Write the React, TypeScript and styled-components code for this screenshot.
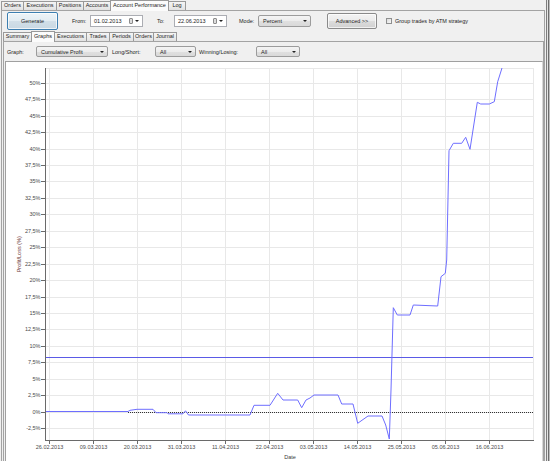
import React from "react";
import styled, { createGlobalStyle } from "styled-components";

const GlobalStyle = createGlobalStyle`
  html, body {
    margin: 0;
    padding: 0;
    background: #f0f0f0;
  }
  body {
    font-family: "Liberation Sans", Arial, sans-serif;
    font-size: 5.5px;
    color: #1e1e1e;
  }
`;

const Window = styled.div`
  display: flex;
  width: 550px;
  height: 461px;
  overflow: hidden;
  background: #f0f0f0;
`;

const Main = styled.div`
  display: flex;
  flex-direction: column;
  width: 545px;
`;

const FrameEdge = styled.div`
  width: 5px;
  background: linear-gradient(
    to right,
    #f0f0f0 0 1px,
    #7d7d7d 1px 2px,
    #e4e4e4 2px 3px,
    #6e6e6e 3px 4px,
    #bdbdbd 4px 5px
  );
`;

const TabStrip = styled.div<{ $indent: number }>`
  position: relative;
  z-index: 1;
  display: flex;
  align-items: flex-end;
  height: 10px;
  padding-left: ${({ $indent }) => $indent}px;
`;

const Tab = styled.div<{ $active?: boolean; $width: number }>`
  box-sizing: border-box;
  display: flex;
  align-items: center;
  justify-content: center;
  width: ${({ $width }) => $width}px;
  height: ${({ $active }) => ($active ? 11 : 9)}px;
  margin-right: -1px;
  margin-bottom: ${({ $active }) => ($active ? -1 : 0)}px;
  border: 1px solid #999;
  border-bottom: none;
  background: ${({ $active }) => ($active ? "#fbfbfb" : "linear-gradient(#f5f5f5, #e2e2e2)")};
  white-space: nowrap;
  line-height: 1;
`;

const OuterPanel = styled.div`
  box-sizing: border-box;
  display: flex;
  flex-direction: column;
  flex: 1;
  width: 544px;
  margin-left: 1px;
  border: 1px solid #a3a3a3;
  border-bottom: none;
`;

const Toolbar = styled.div`
  display: flex;
  align-items: center;
  height: 20px;
  padding-left: 5px;
`;

const PushButton = styled.div<{ $width: number; $height: number; $default?: boolean; $gap?: number }>`
  box-sizing: border-box;
  display: flex;
  align-items: center;
  justify-content: center;
  width: ${({ $width }) => $width}px;
  height: ${({ $height }) => $height}px;
  margin-left: ${({ $gap = 0 }) => $gap}px;
  border: 1px solid ${({ $default }) => ($default ? "#3c7fb1" : "#8a8a8a")};
  border-radius: 2px;
  background: ${({ $default }) =>
    $default
      ? "linear-gradient(#edf4f8, #e2ecf2 50%, #d2dfe8 50%, #c8d8e3)"
      : "linear-gradient(#f3f3f3, #ebebeb 50%, #dddddd 50%, #d0d0d0)"};
  box-shadow: inset 0 0 0 1px rgba(255, 255, 255, 0.7);
`;

const FieldLabel = styled.span<{ $gap: number; $width?: number }>`
  display: inline-block;
  margin-left: ${({ $gap }) => $gap}px;
  width: ${({ $width }) => ($width ? `${$width}px` : "auto")};
  white-space: nowrap;
`;

const DateBox = styled.div`
  box-sizing: border-box;
  display: flex;
  align-items: center;
  width: 53px;
  height: 12px;
  padding-left: 3px;
  border: 1px solid #abadb3;
  background: #fff;
`;

const DateText = styled.span`
  flex: 1;
`;

const CalendarGlyph = styled.span`
  box-sizing: border-box;
  width: 4px;
  height: 6px;
  margin-right: 2px;
  border: 1px solid #8c8c8c;
  border-radius: 1px;
  background: #dcdcdc;
`;

const Arrow = styled.span<{ $size?: number }>`
  width: 0;
  height: 0;
  margin-right: ${({ $size = 3 }) => $size}px;
  border-left: ${({ $size = 3 }) => $size / 2 + 0.5}px solid transparent;
  border-right: ${({ $size = 3 }) => $size / 2 + 0.5}px solid transparent;
  border-top: ${({ $size = 3 }) => $size / 2 + 0.5}px solid #222;
`;

const Combo = styled.div<{ $width: number; $height: number }>`
  box-sizing: border-box;
  display: flex;
  align-items: center;
  width: ${({ $width }) => $width}px;
  height: ${({ $height }) => $height}px;
  padding-left: 4px;
  border: 1px solid #9c9c9c;
  border-radius: 2px;
  background: linear-gradient(#f4f4f4, #ececec 50%, #e0e0e0 50%, #d9d9d9);
`;

const ComboText = styled.span`
  flex: 1;
  white-space: nowrap;
`;

const CheckBox = styled.span`
  box-sizing: border-box;
  width: 6px;
  height: 6px;
  margin-left: 9px;
  border: 1px solid #8e8f8f;
  background: linear-gradient(135deg, #dcdcdc, #f8f8f8);
`;

const InnerPanel = styled.div`
  box-sizing: border-box;
  display: flex;
  flex-direction: column;
  flex: 1;
  width: 541px;
  margin-left: 1px;
  border: 1px solid #a3a3a3;
  border-bottom: none;
  background: #f0f0f0;
`;

const OptionsBar = styled.div`
  display: flex;
  align-items: center;
  height: 19px;
  padding-left: 3px;
`;

const ChartBox = styled.div`
  box-sizing: border-box;
  flex: 1;
  margin-left: 1px;
  border: 1px solid #a0a0a0;
  border-right-color: #d8d8d8;
  border-bottom: none;
  background: #fff;
  overflow: hidden;
`;

const ChartSvg = styled.svg`
  display: block;
  font-family: "Liberation Sans", Arial, sans-serif;
  font-size: 5.5px;
`;

const topTabs = [
  { label: "Orders", width: 23 },
  { label: "Executions", width: 34 },
  { label: "Positions", width: 28 },
  { label: "Accounts", width: 28 },
  { label: "Account Performance", width: 59, active: true },
  { label: "Log", width: 18 },
];

const innerTabs = [
  { label: "Summary", width: 29 },
  { label: "Graphs", width: 24, active: true },
  { label: "Executions", width: 33 },
  { label: "Trades", width: 24 },
  { label: "Periods", width: 25 },
  { label: "Orders", width: 21 },
  { label: "Journal", width: 24 },
];

// plot geometry, in page pixels (the svg viewBox starts at the chart box origin)
const PLOT = { left: 45, right: 533, top: 68, bottom: 440 };
const ZERO_Y = 411.7;
const STEP = 16.45; // px per 2.5 %
const yOf = (pct: number) => ZERO_Y - (pct / 2.5) * STEP;
const crisp = (v: number) => Math.round(v) + 0.5;

// -2,5% .. 50%
const pctTicks = Array.from({ length: 22 }, (_, i) => -2.5 + i * 2.5);
const fmtPct = (v: number) => `${String(v).replace(".", ",")}%`;

const dateTicks = [
  "26.02.2013",
  "09.03.2013",
  "20.03.2013",
  "31.03.2013",
  "11.04.2013",
  "22.04.2013",
  "03.05.2013",
  "14.05.2013",
  "25.05.2013",
  "05.06.2013",
  "16.06.2013",
];
const tickX = (i: number) => 49 + 44 * i;

const profitLine = [
  [45, 411.5], [128, 411.5], [130, 410.3], [137, 409.3], [153, 409.3], [156, 412.7],
  [167, 412.7], [168, 413.8], [183, 413.8], [185.5, 410.8], [188.5, 415], [250, 415],
  [254, 405.3], [270, 405.3], [277.7, 393.3], [283, 400], [297.7, 400], [301.7, 407.7],
  [306, 400], [310, 398], [314, 395], [338, 395], [341.7, 404], [353, 404],
  [357.7, 423.3], [368, 416], [382, 416], [385.7, 425], [389.3, 439], [391, 390],
  [393.3, 307.7], [397.3, 315], [410, 315], [413.3, 305], [437.7, 306], [441, 276.7],
  [445.3, 273.3], [446.7, 260], [449, 150.7], [453.3, 143.3], [461.7, 143.3],
  [465.7, 137.3], [470, 149.3], [477.3, 102.3], [480.7, 104], [489.3, 104],
  [494.3, 101.7], [497.7, 81.7], [501.7, 69], [502.2, 67],
]
  .map(([x, y]) => `${x},${y}`)
  .join(" ");

const ProfitChart = () => (
  <ChartSvg width={535} height={400} viewBox="6 62 535 400">
    <defs>
      <clipPath id="plot">
        <rect x={PLOT.left} y={PLOT.top} width={PLOT.right - PLOT.left} height={PLOT.bottom - PLOT.top} />
      </clipPath>
    </defs>

    {/* grid */}
    <g stroke="#e8e8e8" strokeWidth={1}>
      {pctTicks.map((v) => (
        <line key={v} x1={PLOT.left} x2={PLOT.right} y1={crisp(yOf(v))} y2={crisp(yOf(v))} />
      ))}
      {dateTicks.map((_, i) => (
        <line key={i} x1={tickX(i) + 0.5} x2={tickX(i) + 0.5} y1={PLOT.top} y2={PLOT.bottom} />
      ))}
      <line x1={PLOT.left} x2={PLOT.right} y1={PLOT.top + 0.5} y2={PLOT.top + 0.5} />
      <line x1={PLOT.right + 0.5} x2={PLOT.right + 0.5} y1={PLOT.top} y2={PLOT.bottom} />
    </g>

    {/* reference lines: break-even (dotted) and average */}
    <line x1={128} x2={PLOT.right} y1={crisp(ZERO_Y)} y2={crisp(ZERO_Y)} stroke="#333" strokeDasharray="1 1" />
    <line x1={PLOT.left} x2={PLOT.right} y1={357.5} y2={357.5} stroke="#5a5ae6" />

    <polyline points={profitLine} fill="none" stroke="#6e6eff" strokeWidth={1} clipPath="url(#plot)" />

    {/* axes */}
    <g stroke="#6a6a6a" strokeWidth={1}>
      <line x1={PLOT.left + 0.5} x2={PLOT.left + 0.5} y1={PLOT.top} y2={PLOT.bottom + 1} />
      <line x1={PLOT.left} x2={PLOT.right + 1} y1={PLOT.bottom + 0.5} y2={PLOT.bottom + 0.5} />
      {pctTicks.map((v) => (
        <line key={v} x1={41} x2={PLOT.left} y1={crisp(yOf(v))} y2={crisp(yOf(v))} />
      ))}
      {dateTicks.map((_, i) => (
        <line key={i} x1={tickX(i) + 0.5} x2={tickX(i) + 0.5} y1={PLOT.bottom} y2={PLOT.bottom + 4} />
      ))}
    </g>

    <g fill="#4a4a4a">
      {pctTicks.map((v) => (
        <text key={v} x={40.5} y={yOf(v) + 2} textAnchor="end">
          {fmtPct(v)}
        </text>
      ))}
      {dateTicks.map((d, i) => (
        <text key={d} x={tickX(i) + 0.5} y={448.7} textAnchor="middle">
          {d}
        </text>
      ))}
    </g>

    <text x={290} y={458.7} textAnchor="middle" fill="#3a3a3a">
      Date
    </text>
    <text x={21} y={254.3} textAnchor="middle" fill="#6a3434" transform="rotate(-90 21 254.3)">
      Profit/Loss (%)
    </text>
  </ChartSvg>
);

const DatePicker = ({ value }: { value: string }) => (
  <DateBox>
    <DateText>{value}</DateText>
    <CalendarGlyph />
    <Arrow $size={3} />
  </DateBox>
);

const Dropdown = ({ value, width, height }: { value: string; width: number; height: number }) => (
  <Combo $width={width} $height={height}>
    <ComboText>{value}</ComboText>
    <Arrow $size={3} />
  </Combo>
);

export default function App() {
  return (
    <Window>
      <GlobalStyle />
      <Main>
        <TabStrip $indent={1}>
          {topTabs.map((t) => (
            <Tab key={t.label} $width={t.width} $active={t.active}>
              {t.label}
            </Tab>
          ))}
        </TabStrip>

        <OuterPanel>
          <Toolbar>
            <PushButton $width={51} $height={18} $default>
              Generate
            </PushButton>
            <FieldLabel $gap={14} $width={18}>From:</FieldLabel>
            <DatePicker value="01.02.2013" />
            <FieldLabel $gap={14} $width={17}>To:</FieldLabel>
            <DatePicker value="22.06.2013" />
            <FieldLabel $gap={12} $width={19}>Mode:</FieldLabel>
            <Dropdown value="Percent" width={53} height={12} />
            <PushButton $width={50} $height={16} $gap={16}>
              Advanced &gt;&gt;
            </PushButton>
            <CheckBox />
            <FieldLabel $gap={3}>Group trades by ATM strategy</FieldLabel>
          </Toolbar>

          <TabStrip $indent={1}>
            {innerTabs.map((t) => (
              <Tab key={t.label} $width={t.width} $active={t.active}>
                {t.label}
              </Tab>
            ))}
          </TabStrip>

          <InnerPanel>
            <OptionsBar>
              <FieldLabel $gap={0} $width={29}>Graph:</FieldLabel>
              <Dropdown value="Cumulative Profit" width={72} height={11} />
              <FieldLabel $gap={4} $width={43}>Long/Short:</FieldLabel>
              <Dropdown value="All" width={41} height={11} />
              <FieldLabel $gap={3} $width={57}>Winning/Losing:</FieldLabel>
              <Dropdown value="All" width={44} height={11} />
            </OptionsBar>
            <ChartBox>
              <ProfitChart />
            </ChartBox>
          </InnerPanel>
        </OuterPanel>
      </Main>
      <FrameEdge />
    </Window>
  );
}
